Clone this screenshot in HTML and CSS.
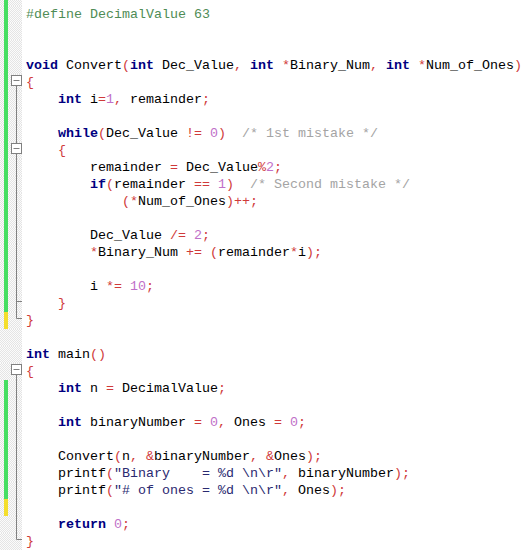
FILE: index.html
```html
<!DOCTYPE html>
<html>
<head>
<meta charset="utf-8">
<link rel="stylesheet" href="styles.css">
</head>
<body>
<svg class="defs" width="0" height="0" aria-hidden="true">
  <symbol id="f-head" viewBox="0 0 14 17"><rect x="3.5" y="1.5" width="10" height="10" fill="#fff" stroke="#808080"/><line x1="5.5" y1="6.5" x2="11.5" y2="6.5" stroke="#808080"/><line x1="8.5" y1="11.5" x2="8.5" y2="17" stroke="#808080"/></symbol>
  <symbol id="f-headin" viewBox="0 0 14 17"><line x1="8.5" y1="0" x2="8.5" y2="1.5" stroke="#808080"/><rect x="3.5" y="1.5" width="10" height="10" fill="#fff" stroke="#808080"/><line x1="5.5" y1="6.5" x2="11.5" y2="6.5" stroke="#808080"/><line x1="8.5" y1="11.5" x2="8.5" y2="17" stroke="#808080"/></symbol>
  <symbol id="f-body" viewBox="0 0 14 17"><line x1="8.5" y1="0" x2="8.5" y2="17" stroke="#808080"/></symbol>
  <symbol id="f-mid" viewBox="0 0 14 17"><line x1="8.5" y1="0" x2="8.5" y2="17" stroke="#808080"/><line x1="8.5" y1="6.5" x2="14" y2="6.5" stroke="#808080"/></symbol>
  <symbol id="f-tail" viewBox="0 0 14 17"><line x1="8.5" y1="0" x2="8.5" y2="6.5" stroke="#808080"/><line x1="8.5" y1="6.5" x2="14" y2="6.5" stroke="#808080"/></symbol>
</svg>
<div class="editor">
  <div class="line g"><span class="mk"></span><span class="fold"></span><span class="code"></span></div>
  <div class="line g"><span class="mk"></span><span class="fold"></span><span class="code"><span class="p">#define DecimalValue 63</span></span></div>
  <div class="line g"><span class="mk"></span><span class="fold"></span><span class="code"></span></div>
  <div class="line g"><span class="mk"></span><span class="fold"></span><span class="code"></span></div>
  <div class="line g"><span class="mk"></span><span class="fold"></span><span class="code"><span class="k">void</span> Convert<span class="o">(</span><span class="k">int</span> Dec_Value<span class="o">,</span> <span class="k">int</span> <span class="o">*</span>Binary_Num<span class="o">,</span> <span class="k">int</span> <span class="o">*</span>Num_of_Ones<span class="o">)</span></span></div>
  <div class="line g"><span class="mk"></span><span class="fold"><svg><use href="#f-head"/></svg></span><span class="code"><span class="o">{</span></span></div>
  <div class="line g"><span class="mk"></span><span class="fold"><svg><use href="#f-body"/></svg></span><span class="code">    <span class="k">int</span> i<span class="o">=</span><span class="n">1</span><span class="o">,</span> remainder<span class="o">;</span></span></div>
  <div class="line g"><span class="mk"></span><span class="fold"><svg><use href="#f-body"/></svg></span><span class="code"></span></div>
  <div class="line g"><span class="mk"></span><span class="fold"><svg><use href="#f-body"/></svg></span><span class="code">    <span class="k">while</span><span class="o">(</span>Dec_Value <span class="o">!=</span> <span class="n">0</span><span class="o">)</span>  <span class="c">/* 1st mistake */</span></span></div>
  <div class="line g"><span class="mk"></span><span class="fold"><svg><use href="#f-headin"/></svg></span><span class="code">    <span class="o">{</span></span></div>
  <div class="line g"><span class="mk"></span><span class="fold"><svg><use href="#f-body"/></svg></span><span class="code">        remainder <span class="o">=</span> Dec_Value<span class="o">%</span><span class="n">2</span><span class="o">;</span></span></div>
  <div class="line g"><span class="mk"></span><span class="fold"><svg><use href="#f-body"/></svg></span><span class="code">        <span class="k">if</span><span class="o">(</span>remainder <span class="o">==</span> <span class="n">1</span><span class="o">)</span>  <span class="c">/* Second mistake */</span></span></div>
  <div class="line g"><span class="mk"></span><span class="fold"><svg><use href="#f-body"/></svg></span><span class="code">            <span class="o">(*</span>Num_of_Ones<span class="o">)++;</span></span></div>
  <div class="line g"><span class="mk"></span><span class="fold"><svg><use href="#f-body"/></svg></span><span class="code"></span></div>
  <div class="line g"><span class="mk"></span><span class="fold"><svg><use href="#f-body"/></svg></span><span class="code">        Dec_Value <span class="o">/=</span> <span class="n">2</span><span class="o">;</span></span></div>
  <div class="line g"><span class="mk"></span><span class="fold"><svg><use href="#f-body"/></svg></span><span class="code">        <span class="o">*</span>Binary_Num <span class="o">+=</span> <span class="o">(</span>remainder<span class="o">*</span>i<span class="o">);</span></span></div>
  <div class="line g"><span class="mk"></span><span class="fold"><svg><use href="#f-body"/></svg></span><span class="code"></span></div>
  <div class="line g"><span class="mk"></span><span class="fold"><svg><use href="#f-body"/></svg></span><span class="code">        i <span class="o">*=</span> <span class="n">10</span><span class="o">;</span></span></div>
  <div class="line g"><span class="mk"></span><span class="fold"><svg><use href="#f-mid"/></svg></span><span class="code">    <span class="o">}</span></span></div>
  <div class="line y"><span class="mk"></span><span class="fold"><svg><use href="#f-tail"/></svg></span><span class="code"><span class="o">}</span></span></div>
  <div class="line"><span class="mk"></span><span class="fold"></span><span class="code"></span></div>
  <div class="line"><span class="mk"></span><span class="fold"></span><span class="code"><span class="k">int</span> main<span class="o">()</span></span></div>
  <div class="line"><span class="mk"></span><span class="fold"><svg><use href="#f-head"/></svg></span><span class="code"><span class="o">{</span></span></div>
  <div class="line g"><span class="mk"></span><span class="fold"><svg><use href="#f-body"/></svg></span><span class="code">    <span class="k">int</span> n <span class="o">=</span> DecimalValue<span class="o">;</span></span></div>
  <div class="line g"><span class="mk"></span><span class="fold"><svg><use href="#f-body"/></svg></span><span class="code"></span></div>
  <div class="line g"><span class="mk"></span><span class="fold"><svg><use href="#f-body"/></svg></span><span class="code">    <span class="k">int</span> binaryNumber <span class="o">=</span> <span class="n">0</span><span class="o">,</span> Ones <span class="o">=</span> <span class="n">0</span><span class="o">;</span></span></div>
  <div class="line g"><span class="mk"></span><span class="fold"><svg><use href="#f-body"/></svg></span><span class="code"></span></div>
  <div class="line g"><span class="mk"></span><span class="fold"><svg><use href="#f-body"/></svg></span><span class="code">    Convert<span class="o">(</span>n<span class="o">,</span> <span class="o">&amp;</span>binaryNumber<span class="o">,</span> <span class="o">&amp;</span>Ones<span class="o">);</span></span></div>
  <div class="line g"><span class="mk"></span><span class="fold"><svg><use href="#f-body"/></svg></span><span class="code">    printf<span class="o">(</span><span class="s">"Binary    = %d \n\r"</span><span class="o">,</span> binaryNumber<span class="o">);</span></span></div>
  <div class="line g"><span class="mk"></span><span class="fold"><svg><use href="#f-body"/></svg></span><span class="code">    printf<span class="o">(</span><span class="s">"# of ones = %d \n\r"</span><span class="o">,</span> Ones<span class="o">);</span></span></div>
  <div class="line y"><span class="mk"></span><span class="fold"><svg><use href="#f-body"/></svg></span><span class="code"></span></div>
  <div class="line"><span class="mk"></span><span class="fold"><svg><use href="#f-body"/></svg></span><span class="code">    <span class="k">return</span> <span class="n">0</span><span class="o">;</span></span></div>
  <div class="line"><span class="mk"></span><span class="fold"><svg><use href="#f-tail"/></svg></span><span class="code"><span class="o">}</span></span></div>
  <div class="line y"><span class="mk"></span><span class="fold"></span><span class="code"></span></div>
</div>
</body>
</html>
```

FILE: styles.css
```css
html, body {
  margin: 0;
  padding: 0;
  background: #fff;
  overflow: hidden;
}

.defs {
  position: absolute;
  width: 0;
  height: 0;
}

.editor {
  display: flex;
  flex-direction: column;
  margin-top: -11.5px;
  width: 530px;
}

.line {
  display: flex;
  height: 17px;
  flex: none;
}

.mk {
  width: 8px;
  flex: none;
  background-image: conic-gradient(#e4e4e4 25%, #fbfbfb 0 50%, #e4e4e4 0 75%, #fbfbfb 0);
  background-size: 2px 2px;
}

.line.g .mk {
  background-image: linear-gradient(to right, transparent 4px, #46de62 4px, #46de62 8px, transparent 8px),
    conic-gradient(#e4e4e4 25%, #fbfbfb 0 50%, #e4e4e4 0 75%, #fbfbfb 0);
  background-size: 100% 100%, 2px 2px;
}

.line.y .mk {
  background-image: linear-gradient(to right, transparent 4px, #f4de2c 4px, #f4de2c 8px, transparent 8px),
    conic-gradient(#e4e4e4 25%, #fbfbfb 0 50%, #e4e4e4 0 75%, #fbfbfb 0);
  background-size: 100% 100%, 2px 2px;
}

.fold {
  width: 14px;
  flex: none;
  background-image: conic-gradient(#e4e4e4 25%, #fbfbfb 0 50%, #e4e4e4 0 75%, #fbfbfb 0);
  background-size: 2px 2px;
}

.fold svg {
  display: block;
  width: 14px;
  height: 17px;
}

.code {
  padding-left: 4px;
  white-space: pre;
  font-family: "Liberation Mono", "Courier New", monospace;
  font-size: 13.33px;
  line-height: 17px;
  color: #000;
}

.k { color: #000080; font-weight: bold; }
.o { color: #d03a3a; }
.n { color: #c070c8; }
.c { color: #a4a4a4; }
.s { color: #2a2a70; }
.p { color: #4f8c55; }
```
